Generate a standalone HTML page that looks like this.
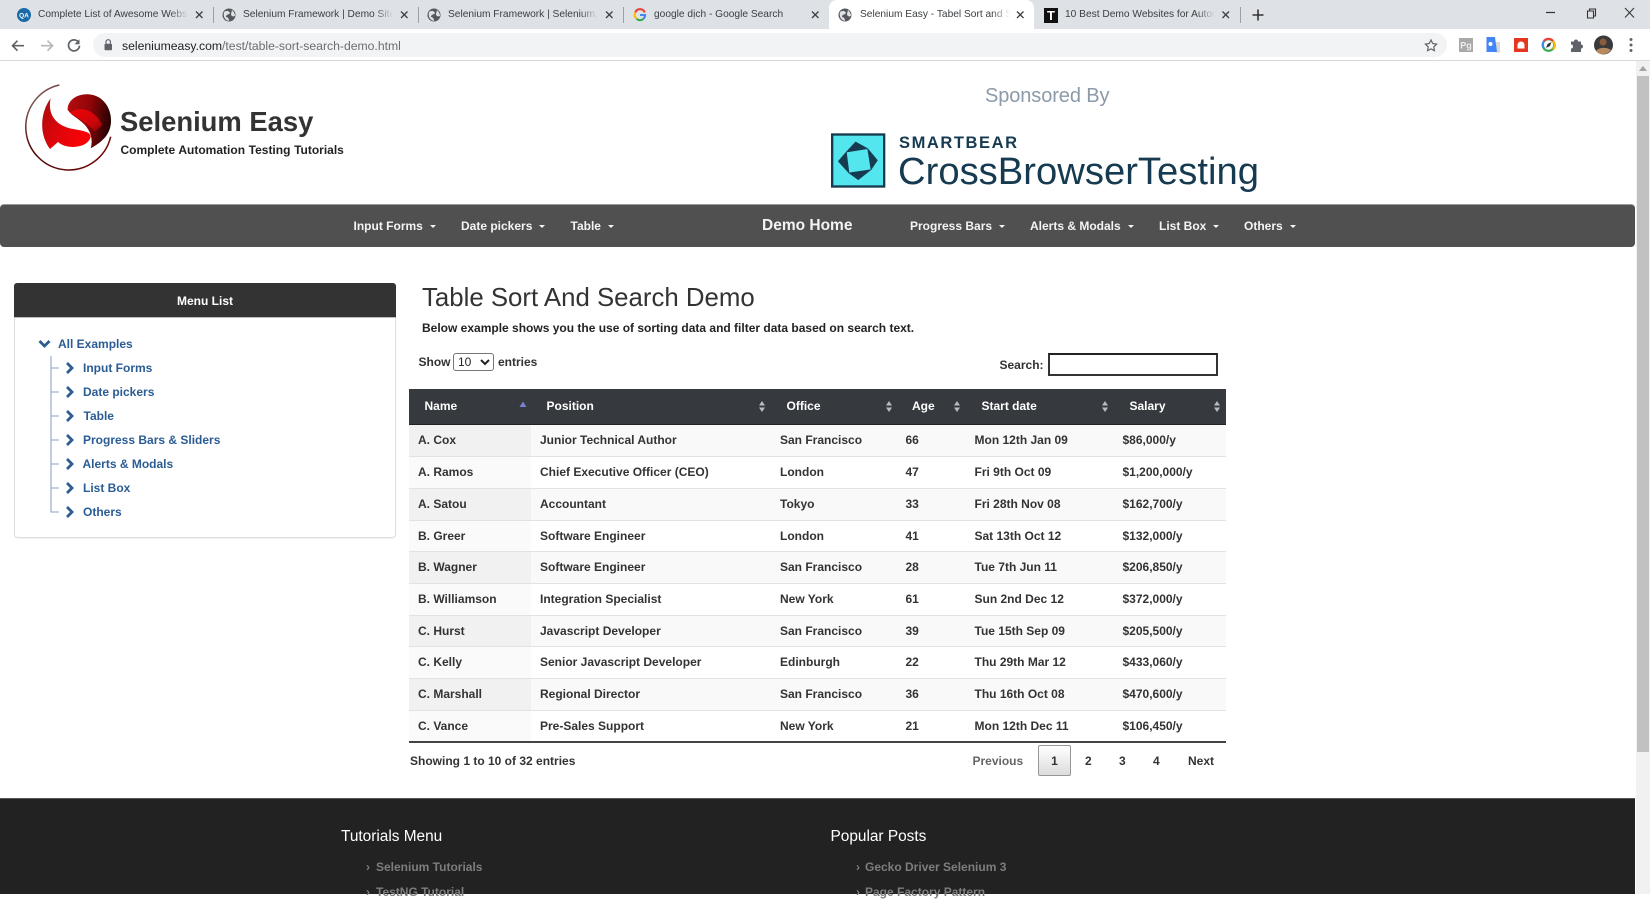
<!DOCTYPE html>
<html lang="en">
<head>
<meta charset="utf-8">
<title>Selenium Easy - Table Sort and Search</title>
<style>
html,body{margin:0;padding:0;width:1650px;height:894px;overflow:hidden;background:#fff;font-family:"Liberation Sans",Arial,sans-serif;color:#333}
.a{position:absolute;white-space:nowrap}
.b{font-weight:bold;font-size:12px;line-height:16px}
#strip{position:absolute;left:0;top:0;width:1650px;height:29px;background:#dee1e6}
#tool{position:absolute;left:0;top:29px;width:1650px;height:31px;background:#fff;border-bottom:1px solid #d8d9dc}
#addr{position:absolute;left:93px;top:33px;width:1354px;height:24px;border-radius:12px;background:#f1f3f4}
.tt{font-size:10.2px;line-height:14px;top:8px;color:#3c4043;overflow:hidden;-webkit-mask-image:linear-gradient(90deg,#000 88%,transparent);mask-image:linear-gradient(90deg,#000 88%,transparent)}
.sep{position:absolute;top:7px;width:1px;height:16px;background:#9aa0a6}
#active{position:absolute;left:829px;top:0;width:205px;height:29px;background:#fff;border-radius:8px 8px 0 0}
.nv{top:217.500px;color:#f4f4f4}
.car{display:inline-block;width:0;height:0;border-left:3px solid transparent;border-right:3px solid transparent;border-top:3px solid #f4f4f4;margin-left:7px;vertical-align:2px}
#nav{position:absolute;left:0;top:204px;width:1635px;height:43px;background:#505050;border-radius:4px;border-top:1px solid #9a9a9a;box-sizing:border-box}
#panel{position:absolute;left:14px;top:283px;width:382px;height:255px;box-sizing:border-box;border:1px solid #ddd;border-radius:4px;box-shadow:0 1px 1px rgba(0,0,0,.05)}
#phead{position:absolute;left:-1px;top:-1px;width:382px;height:35px;background:#333;color:#fff;border-radius:3px 3px 0 0;text-align:center;font-weight:bold;font-size:12px;line-height:36px;border-bottom:1px solid #bbb;box-sizing:border-box}
.tr{color:#2b5c94;top:0}
table{border-collapse:collapse;table-layout:fixed;position:absolute;left:409px;top:389px;width:817px;font-size:12px;font-weight:bold}
thead th{background:#363a3e;color:#fff;height:35px;padding:0 0 0 15.500px;text-align:left;box-sizing:border-box;border-bottom:1px solid #222;font-size:12px}
tbody td{height:32px;box-sizing:border-box;padding:0 0 0 9px;border-bottom:1px solid #e2e2e2;color:#333;background:#fff}
tbody td:nth-child(n+4){padding-left:8.500px}
tbody tr:nth-child(4) td,tbody tr:nth-child(7) td{height:31px}
tbody tr:nth-child(odd) td{background:#f9f9f9}
tbody td:first-child{background:#fafafa}
tbody tr:nth-child(odd) td:first-child{background:#f1f1f1}
tbody tr:last-child td{border-bottom:2px solid #444}
#foot{position:absolute;left:0;top:798px;width:1635px;height:96px;background:#222;border-top:1px solid #555;box-sizing:border-box}
.ft{color:#fff;font-size:15.400px;line-height:20px;top:826.500px}
.fl{color:#7d7d7d}
</style>
</head>
<body>

<div id="strip"></div>
<div id="active"></div>
<div id="tool"></div>
<div id="addr"></div>

<!-- tab favicons and toolbar icons -->
<svg class="a" style="left:0;top:0" width="1650" height="60" viewBox="0 0 1650 60">
  <defs><g id="globe"><circle r="6.500" fill="#55585c"/><path d="M-5,-3 C-2,-5 0,-4 1,-2 C0,0 -3,-1 -3,2 C-1,2 0,4 0,6 C-4,5 -6,2 -5,-3 Z M3,-5 C5,-3 6,-1 6,1 C4,2 2,1 2,-1 Z" fill="#dfe1e5"/></g></defs>
  <circle cx="24" cy="15" r="7" fill="#1a6aa8"/><text x="24" y="17.500" font-family="Liberation Sans" font-size="6.500" font-weight="bold" fill="#fff" text-anchor="middle">QA</text>
  <use href="#globe" x="229" y="15"/>
  <use href="#globe" x="434" y="15"/>
  <use href="#globe" x="845" y="15"/>
  <g transform="translate(640,15) scale(.85)" fill="none" stroke-width="2.400">
    <path d="M5.600,-3 A6,6 0 0 0 -5.600,-3" stroke="#ea4335"/><path d="M-5.600,-3 A6,6 0 0 0 -4,4.500" stroke="#fbbc05"/><path d="M-4,4.500 A6,6 0 0 0 4,4.500" stroke="#34a853"/><path d="M4,4.500 A6,6 0 0 0 6,0 H0" stroke="#4285f4"/>
  </g>
  <rect x="1044" y="8" width="14" height="15" fill="#111"/>
  <text x="1051" y="20" font-family="Liberation Sans" font-size="13" font-weight="bold" fill="#fff" text-anchor="middle">T</text>
  <g stroke="#3c4043" stroke-width="1.300" fill="none">
    <path d="M196,11.500 l6.500,6.500 m0,-6.500 l-6.500,6.500"/><path d="M401,11.500 l6.500,6.500 m0,-6.500 l-6.500,6.500"/><path d="M606,11.500 l6.500,6.500 m0,-6.500 l-6.500,6.500"/><path d="M812,11.500 l6.500,6.500 m0,-6.500 l-6.500,6.500"/><path d="M1017,11.500 l6.500,6.500 m0,-6.500 l-6.500,6.500"/><path d="M1222.500,11.500 l6.500,6.500 m0,-6.500 l-6.500,6.500"/>
  </g>
  <path d="M1258,9.500 v11 M1252.500,15 h11" stroke="#333" stroke-width="1.600"/>
  <path d="M1546,12.500 h9" stroke="#333" stroke-width="1.200"/>
  <path d="M1587.500,11 h6 v7 h-6 z M1589.500,11 v-2 h6 v7 h-2" stroke="#333" stroke-width="1.100" fill="none"/>
  <path d="M1625,8 l9,9.500 m0,-9.500 l-9,9.500" stroke="#333" stroke-width="1"/>
  <g transform="translate(0,.700)">
    <path d="M24,45 h-11 m4.500,-5 l-5,5 l5,5" stroke="#5f6368" stroke-width="1.700" fill="none"/>
    <path d="M41,45 h11 m-4.500,-5 l5,5 l-5,5" stroke="#b6b8bb" stroke-width="1.700" fill="none"/>
    <path d="M78.500,41.500 A5.500,5.500 0 1 0 79.500,45" stroke="#5f6368" stroke-width="1.700" fill="none"/>
    <path d="M79.500,38.500 v5 h-5 z" fill="#5f6368"/>
    <rect x="104.500" y="43" width="7.500" height="6.500" rx="1" fill="#5f6368"/>
    <path d="M106,43 v-1.800 a2.200,2.200 0 0 1 4.400,0 v1.800" stroke="#5f6368" stroke-width="1.200" fill="none"/>
  </g>
  <path d="M1431,40 l1.700,3.500 3.900,.6 -2.800,2.700 .6,3.900 -3.400,-1.800 -3.400,1.800 .6,-3.900 -2.800,-2.700 3.900,-.6 z" fill="none" stroke="#5f6368" stroke-width="1.200"/>
  <rect x="1459" y="38" width="14" height="14" fill="#a9a9a9"/>
  <text x="1466" y="48.500" font-family="Liberation Sans" font-size="9" font-weight="bold" fill="#eee" text-anchor="middle">Pg</text>
  <path d="M1494,42 h6 v10.500 h-5 z" fill="#d5d8dc"/>
  <path d="M1486.500,37 h8.500 l2,15 h-10.500 z" fill="#4285f4"/>
  <circle cx="1490.500" cy="44" r="2" fill="#fff"/>
  <rect x="1514" y="38" width="14" height="14" fill="#e5371f"/>
  <path d="M1517.500,45 a3.500,3.500 0 0 1 7,0 v3.500 h-7 z" fill="#fff"/>
  <circle cx="1548.500" cy="45" r="5.800" fill="#fff" stroke="#34a853" stroke-width="2.200"/>
  <path d="M1544,41 A5.800,5.800 0 0 1 1553,41" fill="none" stroke="#ea4335" stroke-width="2.200"/>
  <path d="M1553,41 A5.800,5.800 0 0 1 1553,49.500" fill="none" stroke="#fbbc05" stroke-width="2.200"/>
  <path d="M1544,41 A5.800,5.800 0 0 0 1544,48" fill="none" stroke="#4285f4" stroke-width="2.200"/>
  <path d="M1546,48 l1.500,-4 4,-2 -1.500,4 z" fill="#333"/>
  <path d="M1571,41.500 h3 a2,2 0 0 1 4,0 h3 v3 a2,2 0 0 1 0,4 v3.500 h-10 v-3.500 a2,2 0 0 0 0,-4 z" fill="#5f6368"/>
  <circle cx="1603.500" cy="45" r="9.500" fill="#3b3a3a"/>
  <path d="M1596,51 C1599,47 1607,47 1611,50 A9.500,9.500 0 0 1 1596,51 Z" fill="#b98a62"/>
  <circle cx="1603" cy="42" r="3.500" fill="#8a5c3c"/>
  <circle cx="1631" cy="39.500" r="1.500" fill="#5f6368"/><circle cx="1631" cy="45" r="1.500" fill="#5f6368"/><circle cx="1631" cy="50.500" r="1.500" fill="#5f6368"/>
</svg>

<span class="a tt" style="left:38px;width:150px">Complete List of Awesome Websites</span>
<span class="a tt" style="left:243px;width:150px">Selenium Framework | Demo Sites</span>
<span class="a tt" style="left:448px;width:150px">Selenium Framework | Selenium, Cucumber</span>
<span class="a tt" style="left:654px;width:150px;-webkit-mask-image:none;mask-image:none">google dịch - Google Search</span>
<span class="a tt" style="left:860px;width:150px">Selenium Easy - Tabel Sort and Search</span>
<span class="a tt" style="left:1065px;width:150px">10 Best Demo Websites for Automation</span>
<div class="sep" style="left:213px"></div><div class="sep" style="left:418px"></div><div class="sep" style="left:623px"></div><div class="sep" style="left:1240px"></div>
<span class="a" style="left:122px;top:39px;font-size:12.200px;line-height:14px;color:#6a6d72"><span style="color:#202124">seleniumeasy.com</span>/test/table-sort-search-demo.html</span>

<!-- scrollbar -->
<div class="a" style="left:1636px;top:61px;width:14px;height:833px;background:#f1f1f1"></div>
<div class="a" style="left:1638.500px;top:66px;width:0;height:0;border-left:4px solid transparent;border-right:4px solid transparent;border-bottom:5px solid #a3a3a3"></div>
<div class="a" style="left:1637px;top:76px;width:11.500px;height:676px;background:#c1c1c1"></div>

<!-- Logo -->
<svg class="a" style="left:20px;top:80px" width="100" height="96" viewBox="0 0 300 288">
  <defs>
    <linearGradient id="lg1" x1="0" y1="0" x2="1" y2="0.200"><stop offset="0" stop-color="#b80d10"/><stop offset=".55" stop-color="#8e0508"/><stop offset="1" stop-color="#2d0203"/></linearGradient>
    <linearGradient id="lg2" x1="0" y1="0" x2="1" y2="0.500"><stop offset="0" stop-color="#a80c0e"/><stop offset=".5" stop-color="#dc060a"/><stop offset="1" stop-color="#f80206"/></linearGradient>
    <linearGradient id="lg3" x1="0" y1="0" x2="1" y2="1"><stop offset="0" stop-color="#f20306"/><stop offset=".7" stop-color="#c8060a"/><stop offset="1" stop-color="#7a0406"/></linearGradient>
    <linearGradient id="ring" x1="0" y1="0" x2="1" y2="1"><stop offset="0" stop-color="#9a7a7a"/><stop offset=".4" stop-color="#4c0505"/><stop offset="1" stop-color="#7a0a0a"/></linearGradient>
  </defs>
  <path d="M118,15 A129,129 0 1 0 272,170" fill="none" stroke="url(#ring)" stroke-width="4.500"/>
  <path d="M143,90 C142,58 175,40 208,43 C252,47 275,88 273,125 C272,150 262,178 212,205 C222,170 205,140 180,122 C168,112 155,105 150,98 Z" fill="url(#lg1)"/>
  <path d="M150,98 C175,78 225,85 246,135 C240,145 225,150 226,156 C210,135 175,115 150,98 Z" fill="url(#lg3)"/>
  <path d="M92,55 C62,95 55,160 90,207 L114,186 C140,210 205,205 212,170 C212,150 170,152 140,142 C105,130 82,100 92,55 Z" fill="url(#lg2)"/>
</svg>
<span class="a" style="left:120px;top:105px;font-size:27.400px;font-weight:bold;line-height:34px;color:#333">Selenium Easy</span>
<span class="a b" style="left:120.500px;top:142px;color:#222;word-spacing:.3px">Complete Automation Testing Tutorials</span>

<span class="a" style="left:985px;top:83px;font-size:20px;line-height:26px;color:#8b9aa8;letter-spacing:-.1px">Sponsored By</span>
<svg class="a" style="left:825px;top:128px" width="66" height="64" viewBox="0 0 198 192">
  <rect x="21.500" y="19.500" width="156" height="156" fill="#54e6ef" stroke="#163b50" stroke-width="7"/>
  <g fill="#163b50" stroke="#163b50" stroke-width="2" stroke-linejoin="round">
    <path d="M64,72 L92,42 L128,62 Z"/><path d="M128,62 L157,97 L138,125 Z"/><path d="M138,125 L100,155 L72,135 Z"/><path d="M72,135 L40,100 L64,72 Z"/>
  </g>
</svg>
<svg class="a" style="left:890px;top:130px" width="380" height="70" viewBox="0 0 380 70">
  <text x="9" y="18" font-family="Liberation Sans" font-size="16.500" font-weight="bold" fill="#163b50" textLength="118" lengthAdjust="spacing">SMARTBEAR</text>
  <text x="8" y="54" font-family="Liberation Sans" font-size="38" fill="#163b50" textLength="361" lengthAdjust="spacingAndGlyphs">CrossBrowserTesting</text>
</svg>

<!-- Nav -->
<div id="nav"></div>
<span class="a b nv" style="left:353.500px">Input Forms<i class="car"></i></span>
<span class="a b nv" style="left:461px">Date pickers<i class="car"></i></span>
<span class="a b nv" style="left:570.500px">Table<i class="car"></i></span>
<span class="a nv" style="left:762px;top:217px;font-size:15.500px;font-weight:bold;line-height:18px;color:#f4f4f4">Demo Home</span>
<span class="a b nv" style="left:910px">Progress Bars<i class="car"></i></span>
<span class="a b nv" style="left:1030px">Alerts &amp; Modals<i class="car"></i></span>
<span class="a b nv" style="left:1159px">List Box<i class="car"></i></span>
<span class="a b nv" style="left:1244px">Others<i class="car"></i></span>

<!-- Sidebar -->
<div id="panel"><div id="phead">Menu List</div></div>
<svg class="a" style="left:0;top:281px" width="100" height="260" viewBox="0 0 100 260">
  <path d="M39.500,60 l5,5 l5,-5" fill="none" stroke="#2b5c94" stroke-width="2.800"/>
  <path d="M51,75 V231 H59 M51,87 H59 M51,111 H59 M51,135 H59 M51,159 H59 M51,183 H59 M51,207 H59" fill="none" stroke="#8ba6c6" stroke-width="1.100"/>
  <g fill="none" stroke="#2b5c94" stroke-width="2.800">
    <path d="M67,82 l5,5 l-5,5"/><path d="M67,106 l5,5 l-5,5"/><path d="M67,130 l5,5 l-5,5"/><path d="M67,154 l5,5 l-5,5"/><path d="M67,178 l5,5 l-5,5"/><path d="M67,202 l5,5 l-5,5"/><path d="M67,226 l5,5 l-5,5"/>
  </g>
</svg>
<span class="a b tr" style="left:58px;top:335.500px">All Examples</span>
<span class="a b tr" style="left:83px;top:359.500px">Input Forms</span>
<span class="a b tr" style="left:83px;top:383.500px">Date pickers</span>
<span class="a b tr" style="left:83.500px;top:407.500px">Table</span>
<span class="a b tr" style="left:83px;top:431.500px">Progress Bars &amp; Sliders</span>
<span class="a b tr" style="left:82.500px;top:455.500px">Alerts &amp; Modals</span>
<span class="a b tr" style="left:83px;top:479.500px">List Box</span>
<span class="a b tr" style="left:83px;top:503.500px">Others</span>

<!-- Main -->
<span class="a" style="left:422px;top:281.500px;font-size:25.800px;line-height:32px;color:#333">Table Sort And Search Demo</span>
<span class="a b" style="left:422px;top:320px;color:#222">Below example shows you the use of sorting data and filter data based on search text.</span>
<span class="a b" style="left:418.500px;top:354px">Show</span>
<select class="a" style="left:453px;top:353px;width:41px;height:18px;font:12px 'Liberation Sans',sans-serif;padding:0;background:#fff;border:1px solid #767676;border-radius:3px;color:#222"><option>10</option></select>
<span class="a b" style="left:498px;top:354px">entries</span>
<span class="a b" style="left:999.500px;top:357px">Search:</span>
<input class="a" style="left:1048px;top:353px;width:170px;height:23px;box-sizing:border-box;border:2px solid #333;border-top-color:#222;background:#fff;padding:0;margin:0" type="text">

<table>
<colgroup><col style="width:122px"><col style="width:240px"><col style="width:126px"><col style="width:69px"><col style="width:148px"><col style="width:112px"></colgroup>
<thead><tr><th>Name</th><th>Position</th><th>Office</th><th style="padding-left:15px">Age</th><th>Start date</th><th>Salary</th></tr></thead>
<tbody>
<tr><td>A. Cox</td><td>Junior Technical Author</td><td>San Francisco</td><td>66</td><td>Mon 12th Jan 09</td><td>$86,000/y</td></tr>
<tr><td>A. Ramos</td><td>Chief Executive Officer (CEO)</td><td>London</td><td>47</td><td>Fri 9th Oct 09</td><td>$1,200,000/y</td></tr>
<tr><td>A. Satou</td><td>Accountant</td><td>Tokyo</td><td>33</td><td>Fri 28th Nov 08</td><td>$162,700/y</td></tr>
<tr><td>B. Greer</td><td>Software Engineer</td><td>London</td><td>41</td><td>Sat 13th Oct 12</td><td>$132,000/y</td></tr>
<tr><td>B. Wagner</td><td>Software Engineer</td><td>San Francisco</td><td>28</td><td>Tue 7th Jun 11</td><td>$206,850/y</td></tr>
<tr><td>B. Williamson</td><td>Integration Specialist</td><td>New York</td><td>61</td><td>Sun 2nd Dec 12</td><td>$372,000/y</td></tr>
<tr><td>C. Hurst</td><td>Javascript Developer</td><td>San Francisco</td><td>39</td><td>Tue 15th Sep 09</td><td>$205,500/y</td></tr>
<tr><td>C. Kelly</td><td>Senior Javascript Developer</td><td>Edinburgh</td><td>22</td><td>Thu 29th Mar 12</td><td>$433,060/y</td></tr>
<tr><td>C. Marshall</td><td>Regional Director</td><td>San Francisco</td><td>36</td><td>Thu 16th Oct 08</td><td>$470,600/y</td></tr>
<tr><td>C. Vance</td><td>Pre-Sales Support</td><td>New York</td><td>21</td><td>Mon 12th Dec 11</td><td>$106,450/y</td></tr>
</tbody>
</table>

<!-- sort icons -->
<svg class="a" style="left:0;top:396px" width="1230" height="20" viewBox="0 0 1230 20">
  <path d="M519.500,11 l3.500,-5.500 l3.500,5.500 z" fill="#7b7fd0"/>
  <g fill="#b9bcbf">
    <path d="M759,9.500 l3,-4.500 l3,4.500 z M759,11.500 l3,4.500 l3,-4.500 z"/>
    <path d="M886,9.500 l3,-4.500 l3,4.500 z M886,11.500 l3,4.500 l3,-4.500 z"/>
    <path d="M954,9.500 l3,-4.500 l3,4.500 z M954,11.500 l3,4.500 l3,-4.500 z"/>
    <path d="M1102,9.500 l3,-4.500 l3,4.500 z M1102,11.500 l3,4.500 l3,-4.500 z"/>
    <path d="M1214,9.500 l3,-4.500 l3,4.500 z M1214,11.500 l3,4.500 l3,-4.500 z"/>
  </g>
</svg>

<span class="a b" style="left:410px;top:753px">Showing 1 to 10 of 32 entries</span>
<span class="a b" style="left:972.500px;top:753px;color:#666">Previous</span>
<div class="a b" style="left:1038px;top:745px;width:33px;height:31px;box-sizing:border-box;border:1px solid #979797;border-radius:2px;background:linear-gradient(#fff,#dcdcdc);text-align:center;line-height:31px">1</div>
<span class="a b" style="left:1085px;top:753px">2</span>
<span class="a b" style="left:1119px;top:753px">3</span>
<span class="a b" style="left:1153px;top:753px">4</span>
<span class="a b" style="left:1188px;top:753px">Next</span>

<!-- Footer -->
<div id="foot"></div>
<span class="a ft" style="left:341px">Tutorials Menu</span>
<span class="a ft" style="left:830.500px">Popular Posts</span>
<span class="a b fl" style="left:366px;top:858.500px">›</span>
<span class="a b fl" style="left:376px;top:858.500px">Selenium Tutorials</span>
<span class="a b fl" style="left:366px;top:883.500px">›</span>
<span class="a b fl" style="left:376px;top:883.500px">TestNG Tutorial</span>
<span class="a b fl" style="left:856px;top:858.500px">›</span>
<span class="a b fl" style="left:865px;top:858.500px">Gecko Driver Selenium 3</span>
<span class="a b fl" style="left:856px;top:883.500px">›</span>
<span class="a b fl" style="left:865px;top:883.500px">Page Factory Pattern</span>

</body>
</html>
